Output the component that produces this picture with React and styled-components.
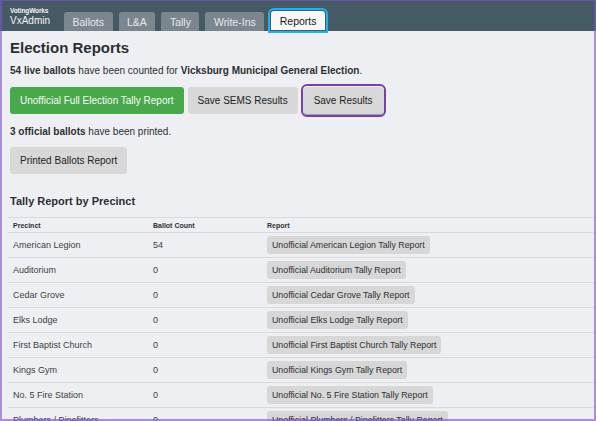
import React from "react";
import styled, { createGlobalStyle } from "styled-components";

const GlobalStyle = createGlobalStyle`
  html, body {
    margin: 0;
    padding: 0;
    height: 100%;
    overflow: hidden;
    background: #eeeff2;
  }
  body {
    font-family: "Liberation Sans", Arial, sans-serif;
    color: #2b2f33;
  }
`;

const Frame = styled.div`
  position: relative;
  height: 100vh;
  overflow: hidden;
  background: #eeeff2;

  &::after {
    content: "";
    position: absolute;
    inset: 0;
    border: 2px solid rgba(128, 82, 206, 0.62);
    border-top-width: 1px;
    pointer-events: none;
  }
`;

const Header = styled.header`
  display: flex;
  align-items: flex-end;
  height: 31px;
  padding-left: 10px;
  background: #455a64;
  box-sizing: border-box;
`;

const Brand = styled.div`
  display: flex;
  flex-direction: column;
  align-self: center;
  margin-top: 2px;
  margin-right: 14px;
  color: #f2f4f5;
`;

const BrandMaker = styled.span`
  font-size: 6.5px;
  font-weight: 700;
  line-height: 8px;
  letter-spacing: -0.1px;
`;

const BrandApp = styled.span`
  font-size: 10px;
  line-height: 11px;
`;

const Tabs = styled.nav`
  display: flex;
  align-items: flex-end;
  gap: 6px;
`;

const Tab = styled.div`
  display: flex;
  align-items: center;
  height: 19px;
  padding: 0 8.5px;
  border-radius: 3px 3px 0 0;
  font-size: 10.5px;
  background: ${(p) => (p.$active ? "#f7f7f7" : "#7b878f")};
  color: ${(p) => (p.$active ? "#1a1a1a" : "#e6e8ea")};
  outline: ${(p) => (p.$active ? "2px solid #1fb3ee" : "none")};
  outline-offset: 1px;
  margin-bottom: ${(p) => (p.$active ? "1px" : "0")};
  margin-left: ${(p) => (p.$active ? "1px" : "0")};
`;

const Main = styled.main`
  padding: 0 0 0 10px;
`;

const Title = styled.h1`
  margin: 8px 0 0;
  font-size: 15px;
  line-height: 18px;
  font-weight: 700;
`;

const Subtitle = styled.h2`
  margin: 20px 0 0;
  font-size: 11px;
  line-height: 14px;
  font-weight: 700;
`;

const Text = styled.p`
  margin: ${(p) => p.$margin || "0"};
  font-size: 10px;
  line-height: 13px;
`;

const ButtonRow = styled.div`
  display: flex;
  gap: 4px;
  margin-top: ${(p) => p.$top || "0"};
`;

const Button = styled.button`
  height: 27px;
  padding: 0 10px;
  border: none;
  border-radius: 3px;
  font-family: inherit;
  font-size: 10px;
  background: ${(p) => (p.$primary ? "#49a84c" : "#d8d8d9")};
  color: ${(p) => (p.$primary ? "#f6fbf6" : "#222")};
  margin-left: ${(p) => (p.$focused ? "2px" : "0")};
  outline: ${(p) => (p.$focused ? "2px solid #7a3fa9" : "none")};
  outline-offset: 1px;
  box-shadow: ${(p) =>
    p.$focused ? "0 2px 2px rgba(0, 0, 0, 0.35)" : "none"};
`;

const Table = styled.div`
  margin: 9px 0 0 -2px;
  border-top: 1px solid #d9dadd;
`;

const Row = styled.div`
  display: grid;
  grid-template-columns: 140px 114px 1fr;
  align-items: center;
  height: ${(p) => (p.$head ? "15px" : "25px")};
  border-bottom: 1px solid #d9dadd;
  box-sizing: border-box;
  padding-left: 5px;
  font-size: ${(p) => (p.$head ? "7px" : "9px")};
  font-weight: ${(p) => (p.$head ? 700 : 400)};
  color: ${(p) => (p.$head ? "#2b2f33" : "#3b3f43")};
`;

const Cell = styled.div`
  white-space: nowrap;
`;

const ReportButton = styled.button`
  justify-self: start;
  height: 18px;
  padding: 0 5px;
  border: none;
  border-radius: 3px;
  font-family: inherit;
  font-size: 8.8px;
  background: #d7d7d8;
  color: #2b2f33;
  white-space: nowrap;
`;

const tabs = ["Ballots", "L&A", "Tally", "Write-Ins", "Reports"];

const precincts = [
  ["American Legion", 54],
  ["Auditorium", 0],
  ["Cedar Grove", 0],
  ["Elks Lodge", 0],
  ["First Baptist Church", 0],
  ["Kings Gym", 0],
  ["No. 5 Fire Station", 0],
  ["Plumbers / Pipefitters", 0],
];

const App = () => (
  <Frame>
    <GlobalStyle />
    <Header>
      <Brand>
        <BrandMaker>VotingWorks</BrandMaker>
        <BrandApp>VxAdmin</BrandApp>
      </Brand>
      <Tabs>
        {tabs.map((t) => (
          <Tab key={t} $active={t === "Reports"}>
            {t}
          </Tab>
        ))}
      </Tabs>
    </Header>
    <Main>
      <Title>Election Reports</Title>
      <Text $margin="7px 0 0">
        <strong>54 live ballots</strong> have been counted for{" "}
        <strong>Vicksburg Municipal General Election</strong>.
      </Text>
      <ButtonRow $top="10px">
        <Button $primary>Unofficial Full Election Tally Report</Button>
        <Button>Save SEMS Results</Button>
        <Button $focused>Save Results</Button>
      </ButtonRow>
      <Text $margin="11px 0 0">
        <strong>3 official ballots</strong> have been printed.
      </Text>
      <ButtonRow $top="9px">
        <Button>Printed Ballots Report</Button>
      </ButtonRow>
      <Subtitle>Tally Report by Precinct</Subtitle>
      <Table>
        <Row $head>
          <Cell>Precinct</Cell>
          <Cell>Ballot Count</Cell>
          <Cell>Report</Cell>
        </Row>
        {precincts.map(([name, count]) => (
          <Row key={name}>
            <Cell>{name}</Cell>
            <Cell>{count}</Cell>
            <ReportButton>Unofficial {name} Tally Report</ReportButton>
          </Row>
        ))}
      </Table>
    </Main>
  </Frame>
);

export default App;
